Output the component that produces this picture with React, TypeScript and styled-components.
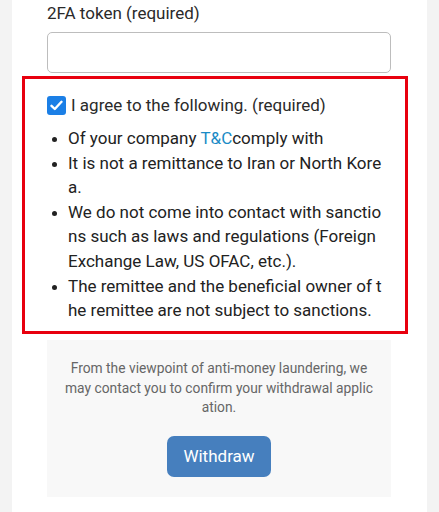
import React from 'react'
import styled, { createGlobalStyle } from 'styled-components'

const GlobalStyle = createGlobalStyle`
  html, body {
    margin: 0;
    padding: 0;
    background: #f3f3f3;
    font-family: Roboto, "Liberation Sans", Arial, sans-serif;
    color: #222;
  }
`

const Page = styled.div`
  background: #ffffff;
  margin: 0 12px;
  min-height: 512px;
  padding-top: 1px;
  box-sizing: border-box;
`

const Field = styled.div`
  margin: 0 0 0 35px;
  width: 344px;
`

const Label = styled.div`
  font-size: 17px;
  line-height: 24px;
  color: #2a2a2a;
  margin-bottom: 7px;
`

const TokenInput = styled.input`
  display: block;
  width: 100%;
  height: 41px;
  box-sizing: border-box;
  border: 1px solid #bdbdbd;
  border-radius: 5px;
  background: #fff;
  outline: none;
`

const AgreeBox = styled.div`
  margin: 3px 0 0 10px;
  width: 386px;
  height: 258px;
  box-sizing: border-box;
  border: 3px solid #e8000e;
  padding: 16px 18px 0 22px;
`

const AgreeRow = styled.label`
  display: flex;
  align-items: center;
  gap: 5px;
  font-size: 17px;
  line-height: 20px;
  color: #2a2a2a;
`

const CheckBox = styled.span`
  width: 19px;
  height: 19px;
  border-radius: 3px;
  background: #1b7fe6;
  display: flex;
  align-items: center;
  justify-content: center;
  flex-shrink: 0;
`

const TermList = styled.ul`
  list-style: none;
  margin: 11px 0 0;
  padding: 0;
`

const Term = styled.li`
  display: flex;
  font-size: 17px;
  line-height: 24.6px;
  color: #222;
`

const Dot = styled.span`
  flex: 0 0 21px;
  display: flex;
  align-items: flex-start;
  padding-top: 11px;
  box-sizing: border-box;

  &::after {
    content: '';
    width: 5px;
    height: 5px;
    border-radius: 50%;
    background: #222;
    margin-left: 5px;
  }
`

const TermText = styled.span`
  word-break: break-all;
  flex: 1;
`

const Link = styled.a`
  color: #1a8bc6;
  text-decoration: none;
`

const Notice = styled.div`
  margin: 6px 0 0 35px;
  width: 344px;
  height: 157px;
  box-sizing: border-box;
  background: #f8f8f8;
  padding: 19px 18px 0;
  text-align: center;
`

const NoticeText = styled.p`
  margin: 0;
  font-size: 13.8px;
  line-height: 19.5px;
  color: #666;
  word-break: break-all;
`

const WithdrawButton = styled.button`
  margin-top: 18px;
  width: 104px;
  height: 41px;
  border: none;
  border-radius: 7px;
  background: #467fbe;
  color: #fff;
  font-family: inherit;
  font-size: 17px;
`

const terms: React.ReactNode[] = [
  <>Of your company <Link href="#">T&amp;C</Link>comply with</>,
  'It is not a remittance to Iran or North Korea.',
  'We do not come into contact with sanctions such as laws and regulations (Foreign Exchange Law, US OFAC, etc.).',
  'The remittee and the beneficial owner of the remittee are not subject to sanctions.',
]

const App: React.FC = () => {
  return (
    <>
      <GlobalStyle />
      <Page>
        <Field>
          <Label>2FA token (required)</Label>
          <TokenInput type="text" />
        </Field>
        <AgreeBox>
          <AgreeRow>
            <CheckBox>
              <svg width="13" height="11" viewBox="0 0 13 11">
                <path d="M1.5 5.8 L4.8 9 L11.5 1.8" fill="none" stroke="#fff" strokeWidth="2.4" strokeLinecap="round" strokeLinejoin="round" />
              </svg>
            </CheckBox>
            I agree to the following. (required)
          </AgreeRow>
          <TermList>
            {terms.map((t, i) => (
              <Term key={i}>
                <Dot />
                <TermText>{t}</TermText>
              </Term>
            ))}
          </TermList>
        </AgreeBox>
        <Notice>
          <NoticeText>
            From the viewpoint of anti-money laundering, we may contact you to confirm your withdrawal application.
          </NoticeText>
          <WithdrawButton>Withdraw</WithdrawButton>
        </Notice>
      </Page>
    </>
  )
}

export default App
